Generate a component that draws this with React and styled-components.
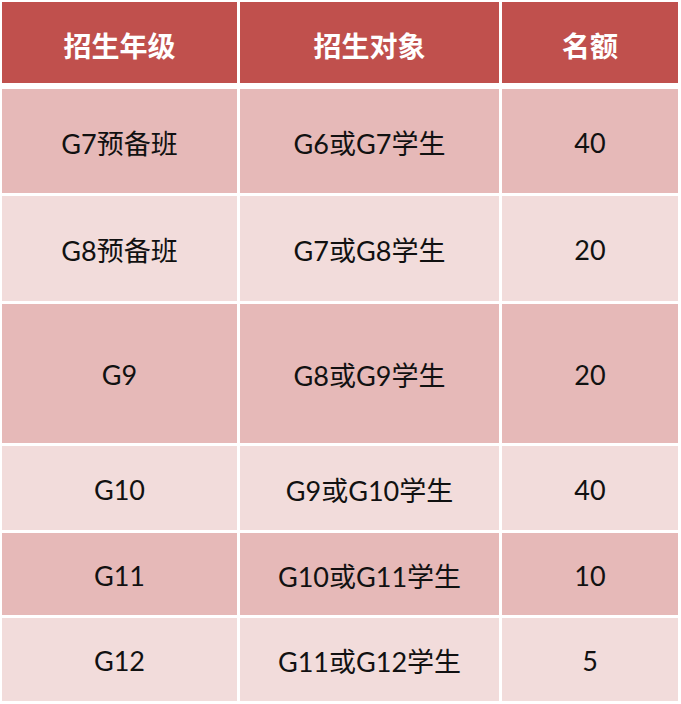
import React from "react";
import styled, { createGlobalStyle } from "styled-components";

const Global = createGlobalStyle`
  html, body { margin: 0; padding: 0; background: #ffffff; }
  body { font-family: "Lato", "Noto Sans CJK SC", sans-serif; }
`;

const Page = styled.div`
  padding: 2px 3px 3px 2px;
  width: 681px;
  box-sizing: border-box;
`;

const Table = styled.div`
  display: flex;
  flex-direction: column;
  gap: 3px;
`;

const Row = styled.div`
  display: grid;
  grid-template-columns: 235px 259px 176px;
  column-gap: 3px;
  height: ${(p) => p.$h}px;
  margin-bottom: ${(p) => (p.$header ? 3 : 0)}px;
`;

const Cell = styled.div`
  display: flex;
  align-items: center;
  justify-content: center;
  background: ${(p) => (p.$header ? "#c0504d" : p.$odd ? "#e6b9b8" : "#f2dcdb")};
  color: ${(p) => (p.$header ? "#ffffff" : "#111111")};
  font-family: "Lato", "Noto Sans CJK SC", sans-serif;
  font-size: ${(p) => (p.$header ? 28 : 27)}px;
  font-weight: ${(p) => (p.$header ? 700 : 400)};
  padding-top: ${(p) => (p.$header ? 5 : 2)}px;
  box-sizing: border-box;
`;

const header = ["招生年级", "招生对象", "名额"];
const rows = [
  { h: 104, c: ["G7预备班", "G6或G7学生", "40"] },
  { h: 105, c: ["G8预备班", "G7或G8学生", "20"] },
  { h: 139, c: ["G9", "G8或G9学生", "20"] },
  { h: 84, c: ["G10", "G9或G10学生", "40"] },
  { h: 82, c: ["G11", "G10或G11学生", "10"] },
  { h: 83, c: ["G12", "G11或G12学生", "5"] },
];

export default function App() {
  return (
    <Page>
      <Global />
      <Table>
        <Row $h={81} $header>
          {header.map((t) => (
            <Cell key={t} $header>
              {t}
            </Cell>
          ))}
        </Row>
        {rows.map((r, i) => (
          <Row key={i} $h={r.h}>
            {r.c.map((t, j) => (
              <Cell key={j} $odd={i % 2 === 0}>
                {t}
              </Cell>
            ))}
          </Row>
        ))}
      </Table>
    </Page>
  );
}
